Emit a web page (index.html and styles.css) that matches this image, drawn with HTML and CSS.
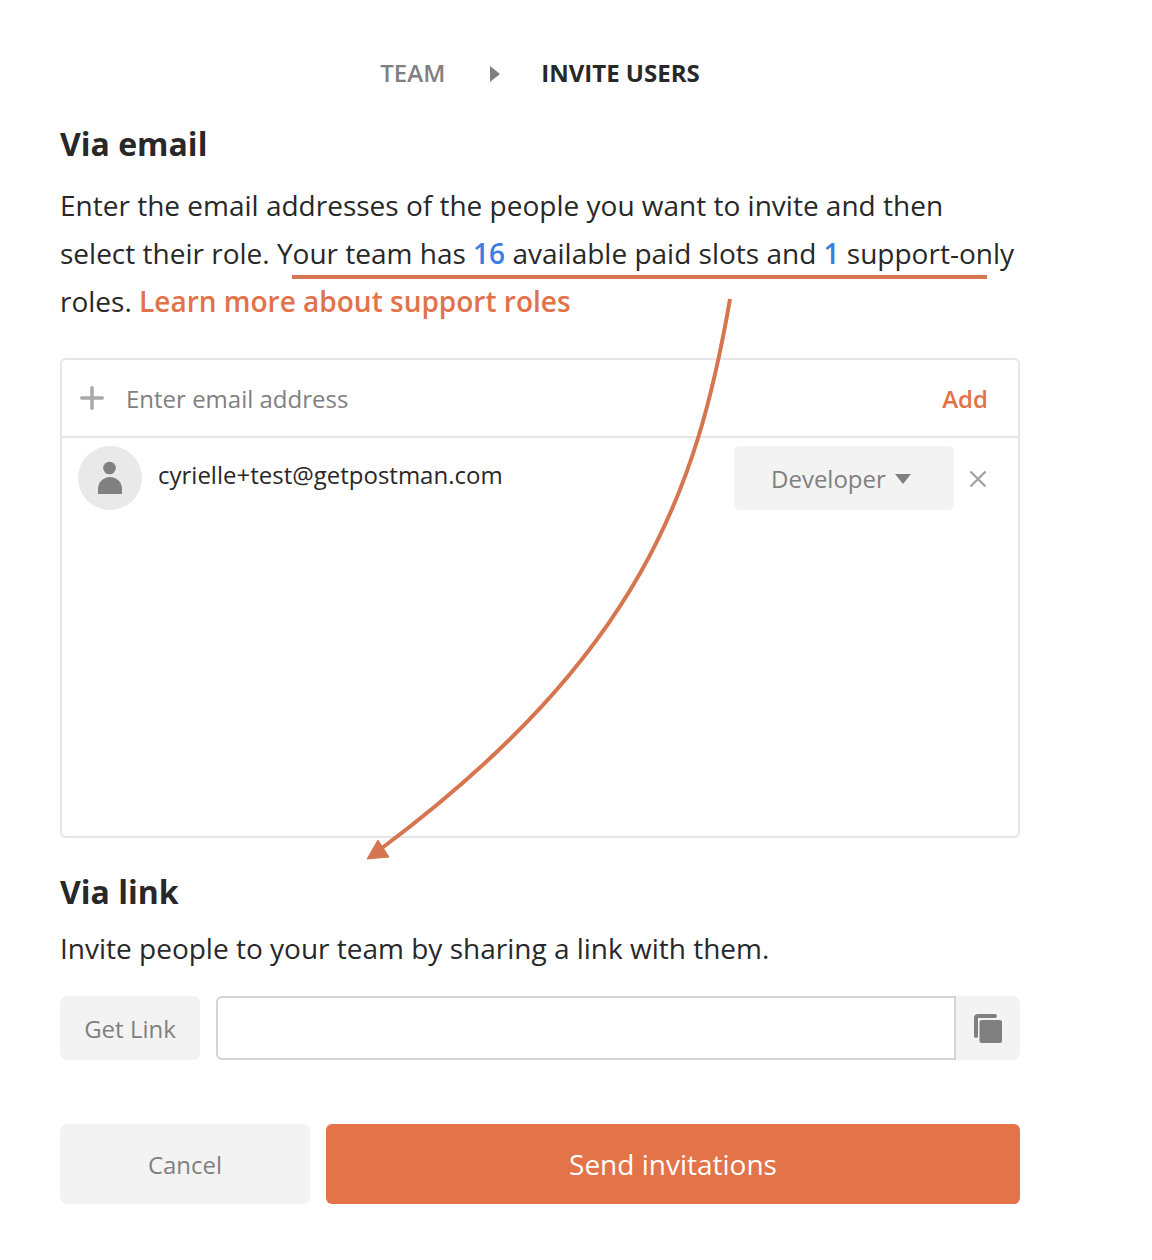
FILE: index.html
```html
<!DOCTYPE html>
<html>
	<head>
		<meta charset="utf-8" />
		<title>Invite users</title>
		<link rel="stylesheet" href="styles.css">
	</head>
	<body>
		<div class="wrap">
			<div class="crumbs">
				<span class="crumb">TEAM</span>
				<span class="crumbArrow"></span>
				<span class="crumb current">INVITE USERS</span>
			</div>

			<h2 class="title">Via email</h2>
			<p class="text">Enter the email addresses of the people you want to invite and then select their role. Your team has <span class="num">16</span> available paid slots and <span class="num">1</span> support-only roles. <a class="more">Learn more about support roles</a></p>

			<div class="box">
				<div class="boxHead">
					<svg class="plus" width="26" height="26" viewBox="0 0 26 26"><path d="M13 2.750v20.500M2.750 13h20.500" stroke="#a9a9a9" stroke-width="3.500" stroke-linecap="round" fill="none"/></svg>
					<span class="placeholder">Enter email address</span>
					<span class="add">Add</span>
				</div>
				<div class="row">
					<div class="avatar">
						<svg width="26" height="34" viewBox="0 0 26 34"><circle cx="12.500" cy="7" r="6.300" fill="#808080"/><path d="M1 33v-5a12 12 0 0 1 24 0v5z" fill="#808080"/></svg>
					</div>
					<span class="mail">cyrielle+test@getpostman.com</span>
					<div class="role">Developer<span class="caret"></span></div>
					<svg class="close" width="18" height="18" viewBox="0 0 18 18"><path d="M1.500 1.500l15 15M16.500 1.500l-15 15" stroke="#a3a3a3" stroke-width="2.400" fill="none"/></svg>
				</div>
			</div>

			<h2 class="title linkTitle">Via link</h2>
			<p class="text linkText">Invite people to your team by sharing a link with them.</p>

			<div class="linkRow">
				<div class="btn getLink">Get Link</div>
				<div class="linkField">
					<div class="linkInput"></div>
					<div class="copy">
						<svg width="30" height="30" viewBox="0 0 30 30"><path d="M3 23V5a2 2 0 0 1 2-2h17" stroke="#808080" stroke-width="4" stroke-linecap="round" fill="none"/><rect x="6.500" y="7" width="22.500" height="23" rx="2" fill="#808080"/></svg>
					</div>
				</div>
			</div>

			<div class="actions">
				<div class="btn cancel">Cancel</div>
				<div class="btn send">Send invitations</div>
			</div>

			<!-- annotation drawn over the page -->
			<svg class="note" width="1152" height="1260" viewBox="0 0 1152 1260">
				<path d="M292 277H987" stroke="#d67650" stroke-width="4" fill="none"/>
				<path d="M730 299C697 490 640 655 382 848" stroke="#d67650" stroke-width="4" fill="none"/>
				<path d="M378 840L367 859L389 857z" fill="#d67650" stroke="#d67650" stroke-width="1"/>
			</svg>
		</div>
	</body>
</html>
```

FILE: styles.css
```css
html,body{
	margin: 0;
	padding: 0;
	background-color: #fff;
}
.wrap{
	width: 960px;
	height: 1260px;
	padding: 0 132px 0 60px;
	font-family: "Open Sans", sans-serif;
	color: #282828;
}
/* top breadcrumb */
.crumbs{
	display: flex;
	align-items: center;
	justify-content: center;
	height: 34px;
	padding-top: 55px;
	font-size: 24px;
	font-weight: 600;
}
.crumb{
	color: #808080;
}
.crumb.current{
	color: #282828;
	font-weight: 700;
}
.crumbArrow{
	width: 0;
	height: 0;
	margin: 4px 41px 0 45px;
	border-left: 10px solid #808080;
	border-top: 8px solid transparent;
	border-bottom: 8px solid transparent;
}
.title{
	margin: 0;
	font-size: 32px;
	line-height: 44px;
	font-weight: 700;
	padding-top: 33px;
}
.text{
	margin: 0;
	font-size: 28px;
	line-height: 48px;
	padding-top: 15px;
}
.num{
	color: #3b7de0;
	font-weight: 600;
}
.more{
	color: #e2724a;
	font-weight: 600;
}
/* email box */
.box{
	height: 476px;
	margin-top: 33px;
	border: 2px solid #e6e6e6;
	border-radius: 6px;
}
.boxHead{
	display: flex;
	align-items: center;
	height: 76px;
	padding: 0 30px 0 17px;
	border-bottom: 2px solid #e6e6e6;
	font-size: 24px;
}
.plus{
	margin-right: 21px;
}
.placeholder{
	flex: 1;
	color: #808080;
}
.add{
	color: #e2724a;
	font-weight: 600;
}
.row{
	display: flex;
	align-items: flex-start;
	padding: 8px 31px 0 16px;
}
.avatar{
	display: flex;
	align-items: center;
	justify-content: center;
	width: 64px;
	height: 64px;
	border-radius: 50%;
	background-color: #e9e9e9;
}
.mail{
	flex: 1;
	margin-left: 16px;
	font-size: 24px;
	line-height: 58px;
}
.role{
	display: flex;
	align-items: center;
	box-sizing: border-box;
	width: 220px;
	height: 64px;
	padding: 1px 0 0 37px;
	border-radius: 6px;
	background-color: #f3f3f3;
	color: #808080;
	font-size: 24px;
}
.caret{
	width: 0;
	height: 0;
	margin-left: 9px;
	border-top: 10px solid #808080;
	border-left: 8px solid transparent;
	border-right: 8px solid transparent;
}
.close{
	margin: 24px 0 0 15px;
}
.linkTitle{
	padding-top: 32px;
}
.linkText{
	padding-top: 10px;
}
.linkRow{
	display: flex;
	gap: 16px;
	margin-top: 24px;
}
.btn{
	display: flex;
	align-items: center;
	justify-content: center;
	border-radius: 6px;
	background-color: #f3f3f3;
	color: #808080;
	font-size: 24px;
}
.getLink{
	width: 140px;
	height: 64px;
}
.linkField{
	flex: 1;
	display: flex;
	height: 64px;
}
.linkInput{
	flex: 1;
	box-sizing: border-box;
	border: 2px solid #d4d4d4;
	border-radius: 6px 0 0 6px;
}
.copy{
	display: flex;
	align-items: center;
	justify-content: center;
	width: 64px;
	border-radius: 0 6px 6px 0;
	background-color: #f3f3f3;
}
.actions{
	display: flex;
	gap: 16px;
	margin-top: 64px;
}
.cancel{
	width: 250px;
	height: 80px;
}
.send{
	flex: 1;
	height: 80px;
	background-color: #e37349;
	color: #fff;
	font-size: 28px;
	font-weight: 500;
}
.note{
	position: absolute;
	left: 0;
	top: 0;
	pointer-events: none;
}
```
